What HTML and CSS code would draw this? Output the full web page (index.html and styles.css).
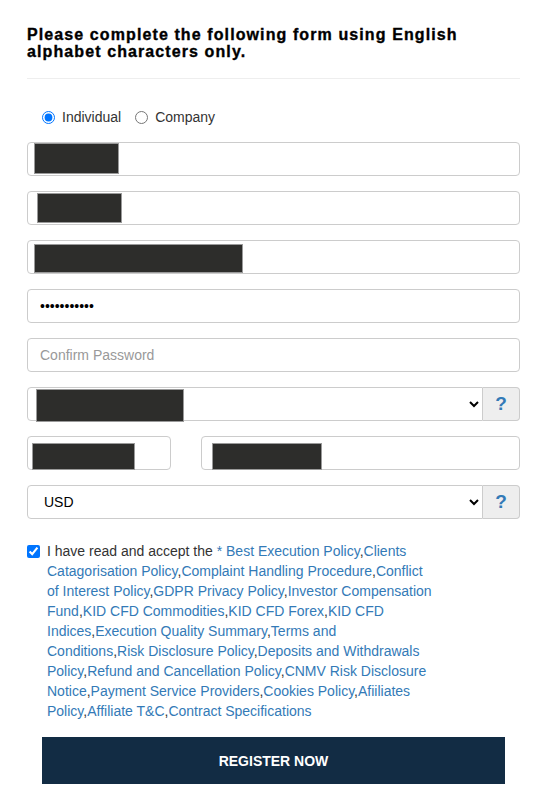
FILE: index.html
```html
<!DOCTYPE html>
<html lang="en">
<head>
<meta charset="utf-8">
<title>Register</title>
<link rel="stylesheet" href="styles.css">
</head>
<body>
<div class="page">
  <h1 class="title">Please complete the following form using English alphabet characters only.</h1>
  <hr class="divider">
  <form class="form">
    <div class="radios">
      <label class="radio"><input type="radio" name="type" checked> Individual</label>
      <label class="radio"><input type="radio" name="type"> Company</label>
    </div>

    <div class="field"><input class="control" type="text"><span class="redact r1"></span></div>
    <div class="field"><input class="control" type="text"><span class="redact r2"></span></div>
    <div class="field"><input class="control" type="text"><span class="redact r3"></span></div>
    <div class="field"><input class="control" type="password" value="12345678901"></div>
    <div class="field"><input class="control" type="password" placeholder="Confirm Password"></div>

    <div class="field group">
      <select class="control select"><option>&nbsp;</option></select>
      <span class="addon">?</span>
      <span class="redact r4"></span>
    </div>

    <div class="field split">
      <div class="cell"><input class="control" type="text"><span class="redact r5"></span></div>
      <div class="cell"><input class="control" type="text"><span class="redact r6"></span></div>
    </div>

    <div class="field group">
      <select class="control select usd"><option>USD</option></select>
      <span class="addon">?</span>
    </div>

    <div class="terms">
      <input class="check" type="checkbox" checked>
      <p class="terms-text">I have read and accept the <span class="star">*</span> <a href="#">Best Execution Policy</a>,<a href="#">Clients Catagorisation Policy</a>,<a href="#">Complaint Handling Procedure</a>,<a href="#">Conflict of Interest Policy</a>,<a href="#">GDPR Privacy Policy</a>,<a href="#">Investor Compensation Fund</a>,<a href="#">KID CFD Commodities</a>,<a href="#">KID CFD Forex</a>,<a href="#">KID CFD Indices</a>,<a href="#">Execution Quality Summary</a>,<a href="#">Terms and Conditions</a>,<a href="#">Risk Disclosure Policy</a>,<a href="#">Deposits and Withdrawals Policy</a>,<a href="#">Refund and Cancellation Policy</a>,<a href="#">CNMV Risk Disclosure Notice</a>,<a href="#">Payment Service Providers</a>,<a href="#">Cookies Policy</a>,<a href="#">Afiiliates Policy</a>,<a href="#">Affiliate T&amp;C</a>,<a href="#">Contract Specifications</a></p>
    </div>

    <button class="submit" type="button">REGISTER NOW</button>
  </form>
</div>
</body>
</html>
```

FILE: styles.css
```css
* { box-sizing: border-box; }
html, body { margin: 0; padding: 0; background: #fff; }
body {
  font-family: "Liberation Sans", Arial, sans-serif;
  font-size: 14px;
  color: #333;
}
.page {
  width: 493px;
  margin-left: 27px;
  padding-top: 26px;
}
.title {
  margin: 0;
  font-size: 16px;
  line-height: 17px;
  font-weight: bold;
  letter-spacing: 1.1px;
  -webkit-text-stroke: 0.35px #000;
  color: #000;
  padding-right: 30px;
}
.divider {
  border: 0;
  border-top: 1px solid #eee;
  margin: 18px 0 0 0;
}
.form { display: block; }
.radios {
  display: flex;
  align-items: center;
  gap: 13px;
  padding-left: 14px;
  height: 20px;
  margin-top: 28px;
  margin-bottom: 15px;
}
.radio {
  display: flex;
  align-items: center;
  gap: 5px;
  line-height: 20px;
}
.radio input { margin: 0 2px 0 1px; width: 13px; height: 13px; }
.field {
  position: relative;
  margin-bottom: 15px;
}
.control {
  display: block;
  width: 100%;
  height: 34px;
  padding: 6px 12px;
  font-family: "Liberation Sans", Arial, sans-serif;
  font-size: 14px;
  color: #555;
  background: #fff;
  border: 1px solid #ccc;
  border-radius: 4px;
  outline: none;
}
.control::placeholder { color: #999; }
input[type="password"].control { color: #000; }
.group { display: flex; }
.group .select {
  flex: 1;
  border-radius: 4px 0 0 4px;
  padding: 6px 8px 6px 12px;
  color: #000;
}
.usd { color: #000; }
.addon {
  flex: 0 0 37px;
  height: 34px;
  background: #eee;
  border: 1px solid #ccc;
  border-left: 0;
  border-radius: 0 4px 4px 0;
  display: flex;
  align-items: center;
  justify-content: center;
  font-size: 19px;
  font-weight: bold;
  color: #337ab7;
}
.split {
  display: grid;
  grid-template-columns: 144px 1fr;
  gap: 30px;
}
.cell { position: relative; }
.redact {
  position: absolute;
  background: #2d2d2b;
  border: 1px solid #9a9a9a;
}
.r1 { left: 7px; top: 1px; width: 85px; height: 31px; }
.r2 { left: 10px; top: 2px; width: 85px; height: 30px; }
.r3 { left: 7px; top: 4px; width: 209px; height: 29px; }
.r4 { left: 9px; top: 2px; width: 148px; height: 33px; }
.r5 { left: 5px; top: 7px; width: 103px; height: 27px; }
.r6 { left: 11px; top: 7px; width: 110px; height: 27px; }
.terms {
  display: flex;
  align-items: flex-start;
  margin-top: 22px;
}
.check {
  width: 13px;
  height: 13px;
  margin: 4px 7px 0 0;
  flex: 0 0 13px;
}
.terms-text {
  margin: 0;
  width: 390px;
  line-height: 20px;
  font-size: 14px;
  color: #333;
}
.terms-text a { color: #337ab7; text-decoration: none; }
.star { color: #337ab7; }
.submit {
  display: block;
  width: 463px;
  height: 47px;
  margin: 16px auto 0;
  background: #122c44;
  color: #fff;
  border: 0;
  font-family: "Liberation Sans", Arial, sans-serif;
  font-size: 14px;
  font-weight: bold;
}
```
